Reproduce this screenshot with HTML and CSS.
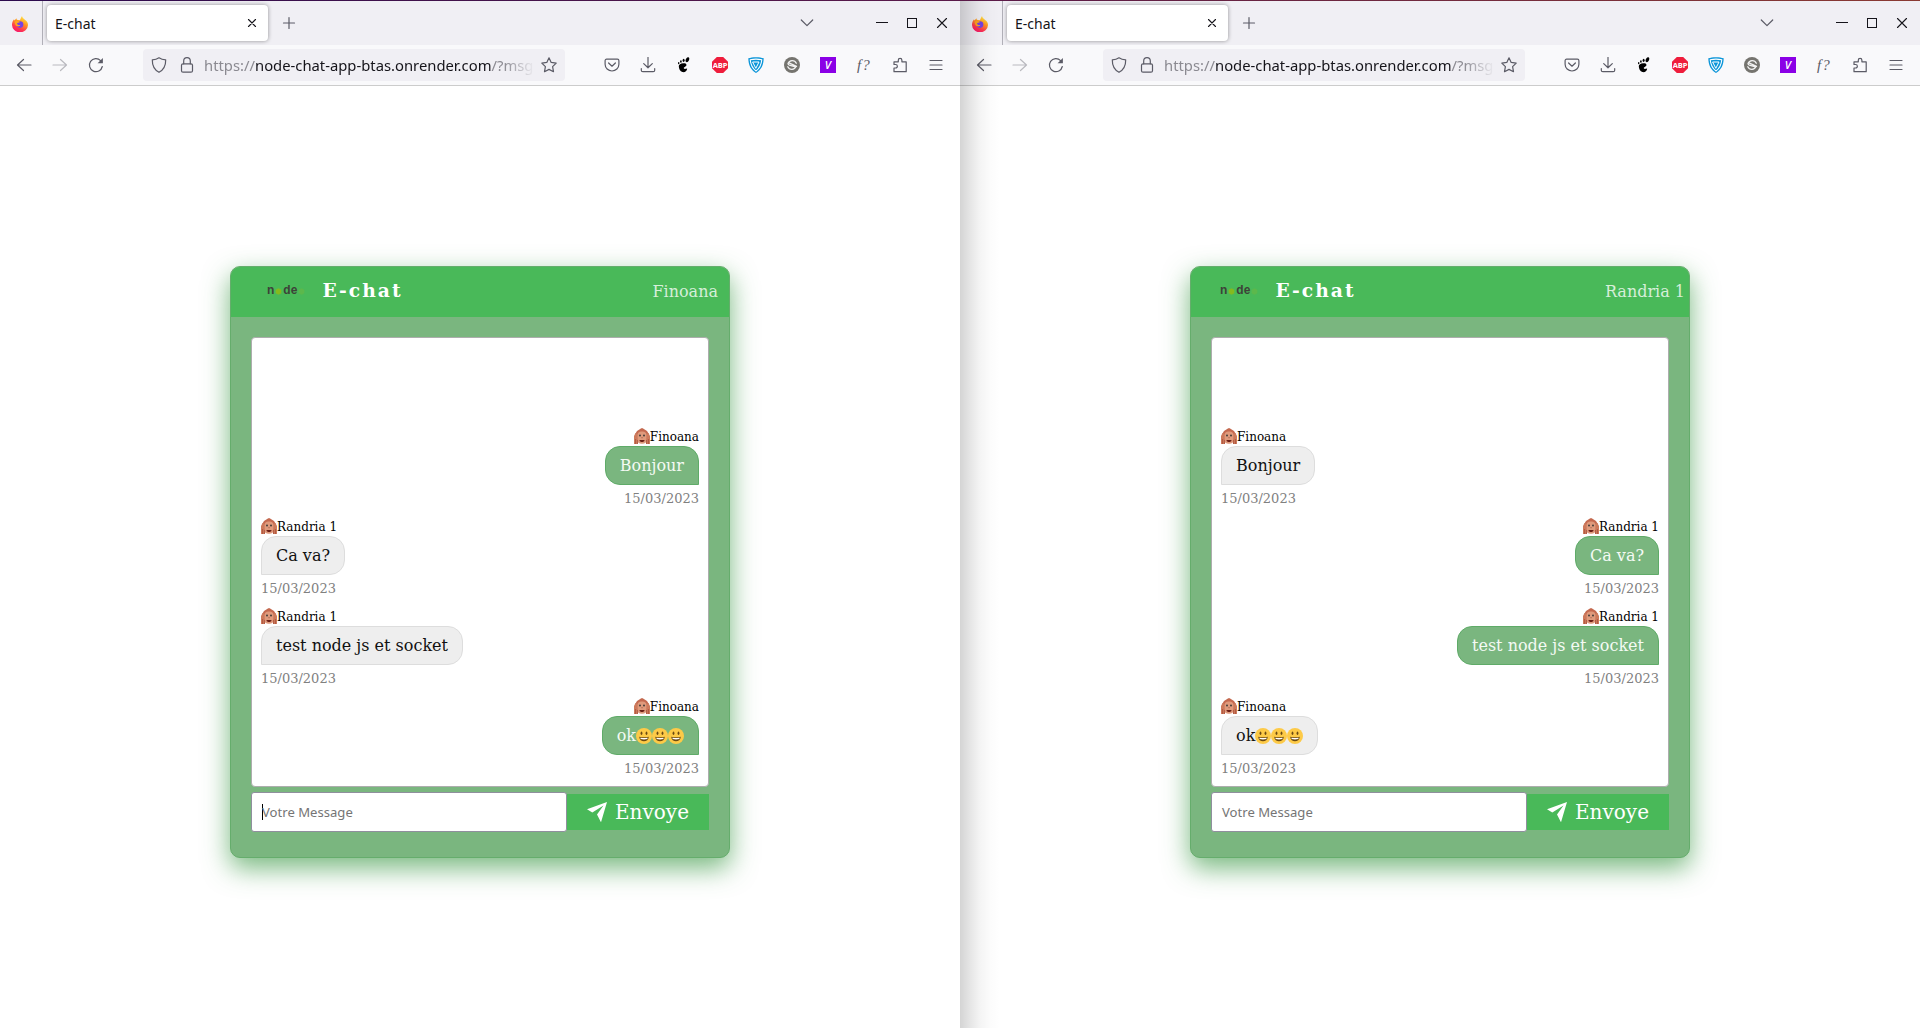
FILE: index.html
```html
<!DOCTYPE html>
<html lang="fr">
<head>
<meta charset="utf-8">
<title>E-chat</title>
<link rel="stylesheet" href="styles.css">
</head>
<body>
<svg class="defs" width="0" height="0" aria-hidden="true">
  <defs>
    <linearGradient id="fx" x1=".8" y1="0" x2=".3" y2="1"><stop offset="0" stop-color="#fff44f"/><stop offset=".4" stop-color="#ff9a1f"/><stop offset=".75" stop-color="#ff3750"/><stop offset="1" stop-color="#f5156c"/></linearGradient>
  </defs>
  <symbol id="firefox" viewBox="0 0 16 16"><path fill="url(#fx)" d="M10 0c.2 1.600 1.500 2.300 2.700 3.600C13.600 4.600 16 5.600 16 9a7.700 7.200 0 0 1-16-.3C0 6.500.8 4.600 2 3.200l.5 1.300L4.400 2.300l.4 1.500 2.700.5C9 3.300 8.600 1.500 10 0z"/><circle cx="8" cy="8.600" r="3.300" fill="#7542e5"/><path fill="#ffa51e" d="M2.500 5.500c2-1.300 4.500-.8 5.500.7-1.500 0-2 .8-3 1 .2 1.500 1.500 2.200 3.500 1.500-1 2-4 2-5 .2-.7-1-.9-2.300-1-3.400z"/></symbol>
  <symbol id="back" viewBox="0 0 16 16"><path d="M15 8H1.500M7.500 2.500 1.500 8l6 5.500"/></symbol>
  <symbol id="fwd" viewBox="0 0 16 16"><path d="M1 8h13.500M8.500 2.500l6 5.500-6 5.500"/></symbol>
  <symbol id="reload" viewBox="0 0 16 16"><path d="M14.300 9.500A6.500 6.500 0 1 1 12.600 3.600"/><path d="M14.900 1v5.300H9.600z" fill="currentColor" stroke="none"/></symbol>
  <symbol id="shield" viewBox="0 0 16 16"><path d="M8 .8c2 1.500 4.500 2 6.700 2C14.800 8 13.500 12.500 8 15.300 2.500 12.500 1.200 8 1.300 2.800 3.500 2.800 6 2.300 8 .8z"/></symbol>
  <symbol id="lock" viewBox="0 0 16 16"><rect x="2.500" y="6.800" width="11" height="8.400" rx="1.500"/><path d="M4.700 6.800V4a3.300 3.300 0 0 1 6.600 0v2.800"/></symbol>
  <symbol id="star" viewBox="0 0 16 16"><path d="m8 .8 2.200 4.600 5 .7-3.600 3.600.9 5L8 12.400l-4.500 2.300.9-5L.8 6.100l5-.7z"/></symbol>
  <symbol id="pocket" viewBox="0 0 16 16"><path d="M2.600 2.200h10.800a1.500 1.500 0 0 1 1.500 1.500v3.600a6.900 6.700 0 0 1-13.800 0V3.700a1.500 1.500 0 0 1 1.500-1.500zM4.600 6 8 9.200 11.400 6"/></symbol>
  <symbol id="download" viewBox="0 0 16 16"><path d="M8 .3v10.400M3.700 6.600 8 10.800l4.300-4.200M1.300 11.500v1.700c0 .8.700 1.500 1.500 1.500h10.400c.8 0 1.500-.7 1.500-1.500v-1.700"/></symbol>
  <symbol id="foot" viewBox="0 0 16 16"><g fill="#000" stroke="none"><path d="M2.800 9.500c-.3-2.300 2.700-3.900 6-3.200 2.400.6 1.900 2.700.3 3.400-1.100.5-1.600 1-1.100 1.900.4.700 1.600.6 1.800-.2l1.400.4c-.5 2.700-2.600 3.900-4.800 3.300-2.300-.7-3.400-3.100-3.600-5.600z"/><ellipse cx="11.400" cy="2.700" rx="1.600" ry="2.600" transform="rotate(25 11.400 2.700)"/><ellipse cx="7.600" cy="3.300" rx="1" ry="1.600"/><ellipse cx="4.900" cy="4.500" rx=".8" ry="1.300"/><ellipse cx="2.700" cy="6.200" rx=".7" ry="1.100"/></g></symbol>
  <symbol id="vpn" viewBox="0 0 16 16"><path fill="#0d96d9" d="M8 .2c3.500 0 5.500.5 7.700 1C15.500 8 13.500 12.500 8 16 2.500 12.500.5 8 .3 1.200 2.500.7 4.500.2 8 .2z"/><path fill="none" stroke="#fff" stroke-width="1.100" d="M2.200 2.800C2.700 8 4.500 11.500 8 14c3.500-2.500 5.300-6 5.800-11.200-4-1-7.600-1-11.600 0z"/><path fill="none" stroke="#fff" stroke-width="1" d="M5 5h6l-3 6z"/></symbol>
  <symbol id="slash" viewBox="0 0 16 16"><circle cx="8" cy="8" r="8" fill="#75746f"/><path d="M12.300 6.200A4.500 4.500 0 0 0 4 6.500c0 .8.500 1.300 1.300 1.600l5.400 1.600M3.800 9.800a4.500 4.500 0 0 0 8.200-.2M5.500 6.200l7 3.200" fill="none" stroke="#f3f3f3" stroke-width="1.300"/></symbol>
  <symbol id="puzzle" viewBox="0 0 16 16"><path d="M2 14.700V11h1.600a1.700 1.700 0 0 0 0-3.500H2V4.800h4.300V3.200a1.800 1.800 0 0 1 3.600 0v1.600h4.300v9.900z"/></symbol>
  <symbol id="menu" viewBox="0 0 16 16"><path d="M2 3.500h12M2 8h12M2 12.500h12"/></symbol>
  <symbol id="close" viewBox="0 0 16 16"><path d="m4.500 4.500 7 7M11.500 4.500l-7 7"/></symbol>
  <symbol id="plus" viewBox="0 0 16 16"><path d="M8 2.500v11M2.500 8h11"/></symbol>
  <symbol id="chevron" viewBox="0 0 16 16"><path d="m2.300 5 5.700 5.700L13.700 5"/></symbol>
  <symbol id="wmin" viewBox="0 0 16 16"><path d="M3 7.500h10"/></symbol>
  <symbol id="wmax" viewBox="0 0 16 16"><path d="M3.500 3.500h9v9h-9z"/></symbol>
  <symbol id="wclose" viewBox="0 0 16 16"><path d="m3.500 3.500 9 9M12.500 3.500l-9 9"/></symbol>
  <symbol id="hex" viewBox="0 0 8 8"><path d="M4 .3 7.200 2v4L4 7.700.8 6V2z"/></symbol>
  <symbol id="monkey" viewBox="0 0 16 16"><path fill="#c4694f" d="M1.500 5.500 3 3 6.500.8 8 0l1.500.8L13 3l1.500 2.500V10h-13z"/><rect x="3" y="3.500" width="10" height="12.300" rx="4.500" fill="#df9a7c"/><path fill="#cd7a5c" d="M1.500 5 3.500 6l.5 10H0V8zM14.500 5l-2 1-.5 10h4V8z"/><path fill="#a94f3a" d="M1.300 11h.8v5h-.8zm2 1h.7v4h-.7zM12 12h.7v4H12zm1.900-1h.8v5h-.8z"/><circle cx="6" cy="7.500" r=".9" fill="#333"/><circle cx="10" cy="7.500" r=".9" fill="#333"/><path stroke="#8f4b38" stroke-width=".6" d="M7.300 9.700h1.500"/><path fill="#6d1f16" d="M5.500 12h5c0 2.700-5 2.700-5 0z"/></symbol>
  <symbol id="smile" viewBox="0 0 16 16"><circle cx="8" cy="8" r="8" fill="#fdca47"/><ellipse cx="5.500" cy="5.200" rx=".9" ry="1.700" fill="#6b4a12"/><ellipse cx="10.500" cy="5.200" rx=".9" ry="1.700" fill="#6b4a12"/><path fill="#6b4a12" d="M3.200 8.700c3 .7 6.600.7 9.600 0-.3 6.200-9.300 6.200-9.600 0z"/><path fill="#fff" d="M4.300 9.700c2.500.4 4.900.4 7.400 0l-.4 1.400c-2 .4-4.600.4-6.600 0z"/></symbol>
  <symbol id="plane" viewBox="0 0 20 20"><path fill="#fff" d="M20 0 0 7.300l5.300 3.100L16.500 3.500 10 12.500l4 7.800z"/></symbol>
</svg>

<div class="desktop">
  <div class="topline"></div>
  <main class="windows">
    <section class="window">
      <div class="tabbar">
        <div class="pinned"><svg class="i fox"><use href="#firefox"/></svg></div>
        <div class="tab"><span>E-chat</span><svg class="i dark"><use href="#close"/></svg></div>
        <svg class="i newtab"><use href="#plus"/></svg>
        <div class="controls"><svg class="i chev"><use href="#chevron"/></svg><svg class="i dark crisp"><use href="#wmin"/></svg><svg class="i dark crisp"><use href="#wmax"/></svg><svg class="i dark"><use href="#wclose"/></svg></div>
      </div>
      <div class="toolbar">
        <div class="nav"><svg class="i"><use href="#back"/></svg><svg class="i off"><use href="#fwd"/></svg><svg class="i"><use href="#reload"/></svg></div>
        <div class="url"><svg class="i"><use href="#shield"/></svg><svg class="i"><use href="#lock"/></svg><span class="address">https://<b>node-chat-app-btas.onrender.com</b>/?msg</span><svg class="i"><use href="#star"/></svg></div>
        <div class="extensions"><svg class="i"><use href="#pocket"/></svg><svg class="i"><use href="#download"/></svg><svg class="i"><use href="#foot"/></svg><span class="abp">ABP</span><svg class="i plain"><use href="#vpn"/></svg><svg class="i plain"><use href="#slash"/></svg><span class="violet">V</span><span class="fq">f?</span><svg class="i"><use href="#puzzle"/></svg><svg class="i"><use href="#menu"/></svg></div>
      </div>
      <div class="page">
        <div class="chat">
          <header class="head"><span class="logo">n<svg class="hex"><use href="#hex"/></svg>de<svg class="hex dim"><use href="#hex"/></svg></span><h1>E-chat</h1><span class="user">Finoana</span></header>
          <div class="messages">
            <div class="msg mine"><div class="name"><svg class="emoji"><use href="#monkey"/></svg><span>Finoana</span></div><div class="bubble">Bonjour</div><time>15/03/2023</time></div>
            <div class="msg"><div class="name"><svg class="emoji"><use href="#monkey"/></svg><span>Randria 1</span></div><div class="bubble">Ca va?</div><time>15/03/2023</time></div>
            <div class="msg"><div class="name"><svg class="emoji"><use href="#monkey"/></svg><span>Randria 1</span></div><div class="bubble">test node js et socket</div><time>15/03/2023</time></div>
            <div class="msg mine"><div class="name"><svg class="emoji"><use href="#monkey"/></svg><span>Finoana</span></div><div class="bubble">ok<svg class="emoji"><use href="#smile"/></svg><svg class="emoji"><use href="#smile"/></svg><svg class="emoji"><use href="#smile"/></svg></div><time>15/03/2023</time></div>
          </div>
          <div class="compose"><div class="field focused"><span>Votre Message</span></div><div class="send"><svg class="plane"><use href="#plane"/></svg><span>Envoye</span></div></div>
        </div>
      </div>
    </section>
    <section class="window second">
      <div class="tabbar">
        <div class="pinned"><svg class="i fox"><use href="#firefox"/></svg></div>
        <div class="tab"><span>E-chat</span><svg class="i dark"><use href="#close"/></svg></div>
        <svg class="i newtab"><use href="#plus"/></svg>
        <div class="controls"><svg class="i chev"><use href="#chevron"/></svg><svg class="i dark crisp"><use href="#wmin"/></svg><svg class="i dark crisp"><use href="#wmax"/></svg><svg class="i dark"><use href="#wclose"/></svg></div>
      </div>
      <div class="toolbar">
        <div class="nav"><svg class="i"><use href="#back"/></svg><svg class="i off"><use href="#fwd"/></svg><svg class="i"><use href="#reload"/></svg></div>
        <div class="url"><svg class="i"><use href="#shield"/></svg><svg class="i"><use href="#lock"/></svg><span class="address">https://<b>node-chat-app-btas.onrender.com</b>/?msg</span><svg class="i"><use href="#star"/></svg></div>
        <div class="extensions"><svg class="i"><use href="#pocket"/></svg><svg class="i"><use href="#download"/></svg><svg class="i"><use href="#foot"/></svg><span class="abp">ABP</span><svg class="i plain"><use href="#vpn"/></svg><svg class="i plain"><use href="#slash"/></svg><span class="violet">V</span><span class="fq">f?</span><svg class="i"><use href="#puzzle"/></svg><svg class="i"><use href="#menu"/></svg></div>
      </div>
      <div class="page">
        <div class="chat">
          <header class="head"><span class="logo">n<svg class="hex"><use href="#hex"/></svg>de<svg class="hex dim"><use href="#hex"/></svg></span><h1>E-chat</h1><span class="user">Randria 1</span></header>
          <div class="messages">
            <div class="msg"><div class="name"><svg class="emoji"><use href="#monkey"/></svg><span>Finoana</span></div><div class="bubble">Bonjour</div><time>15/03/2023</time></div>
            <div class="msg mine"><div class="name"><svg class="emoji"><use href="#monkey"/></svg><span>Randria 1</span></div><div class="bubble">Ca va?</div><time>15/03/2023</time></div>
            <div class="msg mine"><div class="name"><svg class="emoji"><use href="#monkey"/></svg><span>Randria 1</span></div><div class="bubble">test node js et socket</div><time>15/03/2023</time></div>
            <div class="msg"><div class="name"><svg class="emoji"><use href="#monkey"/></svg><span>Finoana</span></div><div class="bubble">ok<svg class="emoji"><use href="#smile"/></svg><svg class="emoji"><use href="#smile"/></svg><svg class="emoji"><use href="#smile"/></svg></div><time>15/03/2023</time></div>
          </div>
          <div class="compose"><div class="field"><span>Votre Message</span></div><div class="send"><svg class="plane"><use href="#plane"/></svg><span>Envoye</span></div></div>
        </div>
      </div>
    </section>
  </main>
</div>
</body>
</html>
```
FILE: styles.css
```css
* { box-sizing: border-box; }
body { margin: 0; background: #fff; overflow: hidden; }
.defs { position: absolute; }
.desktop { width: 1920px; height: 1028px; display: flex; flex-direction: column; }
.topline { height: 1px; background: linear-gradient(90deg, #2c0b4e, #5a1a49 50%, #8a3a32); }
.windows { flex: 1; display: grid; grid-template-columns: 960px 960px; }
.window { display: flex; flex-direction: column; font-family: "Noto Sans", "Open Sans", sans-serif; color: #15141a; }
/* the left window casts its shadow on the right one */
.second { position: relative; }
.second::before {
  content: ""; position: absolute; left: 0; top: 0; bottom: 0; width: 40px; z-index: 2;
  background: linear-gradient(90deg, rgba(0,0,0,.17), rgba(0,0,0,.1) 25%, rgba(0,0,0,.045) 50%, rgba(0,0,0,.01) 78%, transparent);
}
.i { width: 16px; height: 16px; flex: none; fill: none; stroke: #5b5b66; color: #5b5b66; stroke-width: 1.2; stroke-linecap: round; stroke-linejoin: round; overflow: visible; }
.i.dark { stroke: #15141a; stroke-width: 1.1; }
.i.off { opacity: .4; }
.i.fox, .i.plain { stroke: none; }
.crisp { shape-rendering: crispEdges; }

.tabbar { height: 44px; background: #f0eff4; display: flex; align-items: center; }
.pinned { width: 43px; height: 44px; border-right: 1px solid #b1b0b8; padding: 14px 0 0 12px; flex: none; }
.tab { width: 221px; height: 36px; margin-left: 4px; padding: 0 8px; background: #fff; border-radius: 4px; box-shadow: 0 0 4px rgba(0,0,0,.4); display: flex; align-items: center; justify-content: space-between; font-size: 14px; }
.newtab { margin-left: 13px; }
.controls { margin-left: auto; padding-right: 10px; display: flex; gap: 14px; }
.chev { margin-right: 45px; }

.toolbar { height: 41px; background: #f9f9fb; border-bottom: 1px solid #ccc; display: flex; align-items: center; }
.nav { display: flex; gap: 20px; padding-left: 16px; width: 143px; }
.url { width: 422px; height: 32px; border-radius: 4px; background: #f0eff4; display: flex; align-items: center; padding: 0 8px; }
.url .i:nth-child(2) { margin-left: 12px; }
.address { width: 332px; margin-left: 9px; margin-right: 5px; overflow: hidden; white-space: nowrap; font-size: 14.800px; color: #8b8a91; -webkit-mask-image: linear-gradient(90deg, #000 300px, transparent 331px); mask-image: linear-gradient(90deg, #000 300px, transparent 331px); }
.address b { font-weight: 400; color: #15141a; }
.extensions { display: flex; gap: 20px; align-items: center; padding-left: 39px; }
.abp { width: 16px; height: 16px; background: #ef1d3c; color: #fff; font: 700 7.500px/16px "Open Sans", sans-serif; letter-spacing: -.2px; text-align: center; clip-path: polygon(30% 0, 70% 0, 100% 30%, 100% 70%, 70% 100%, 30% 100%, 0 70%, 0 30%); }
.violet { width: 16px; height: 16px; background: #8a00e6; color: #fff; font: italic 600 11px/16px "Open Sans", sans-serif; text-align: center; }
.fq { width: 16px; font: italic 15px/16px "Liberation Serif", serif; color: #5b5b66; white-space: nowrap; letter-spacing: 1px; padding-left: 1px; }

.page { flex: 1; background: #fff; padding: 180px 0 0 230px; font-family: "DejaVu Serif", serif; }
.chat { width: 500px; height: 592px; background: #7ab67f; border: 1px solid #65ad6c; border-radius: 10px; box-shadow: 0 10px 27px rgba(55,150,65,.68); display: flex; flex-direction: column; }
.head { height: 50px; background: #49b959; border-radius: 9px 9px 0 0; color: #fff; display: flex; align-items: center; padding: 0 11px 4px 36px; flex: none; }
.second .head { padding: 0 4px 4px 29px; }
.logo { width: 55.500px; height: 12px; display: flex; align-items: center; font: 700 12px/12px "Liberation Sans", sans-serif; color: #3d4238; }
.hex { width: 7px; height: 7px; fill: #84ba1f; margin: 2px 1px 0; }
.hex.dim { fill: #5cb84c; }
h1 { margin: 0; font-size: 18.720px; line-height: 24px; font-weight: 700; letter-spacing: 2px; }
.user { margin-left: auto; font-size: 16px; line-height: 20px; color: rgba(255,255,255,.78); padding-top: 4px; }

.messages { margin: 20px 20px 0; height: 450px; flex: none; background: #fff; border: 1px solid #adadad; border-radius: 4px; display: flex; flex-direction: column; justify-content: flex-end; padding: 0 9px; }
.msg { height: 90px; display: flex; flex-direction: column; align-items: flex-start; }
.mine { align-items: flex-end; }
.name { height: 20px; display: flex; font-size: 12px; line-height: 23px; color: #000; }
.emoji { width: 16px; height: 16px; flex: none; }
.name .emoji { margin-top: 2px; }
.bubble { height: 39px; padding: 0 14px; border: 1px solid #ddd; border-radius: 15px 15px 15px 0; background: #eee; color: #111; font-size: 16px; display: flex; align-items: center; white-space: nowrap; }
.mine .bubble { border-color: #5fab68; background: #7ab67f; color: #f4faf4; border-radius: 15px 15px 0 15px; }
time { font-size: 13px; line-height: 27px; color: gray; }

.compose { display: flex; align-items: center; height: 40px; margin: 5px 20px 0; }
.field { width: 316px; height: 40px; background: #fff; border: 1px solid #8f8f9d; border-radius: 3px; padding-left: 10px; font: 13.100px/38px "Noto Sans", sans-serif; color: #757575; display: flex; align-items: center; }
.focused::before { content: ""; width: 1px; height: 16px; background: #000; margin-right: -1px; }
.send { flex: 1; height: 36px; background: #49b959; color: #fff; display: flex; align-items: center; justify-content: center; gap: 8px; font-size: 20px; }
.plane { width: 20px; height: 20px; }
```
